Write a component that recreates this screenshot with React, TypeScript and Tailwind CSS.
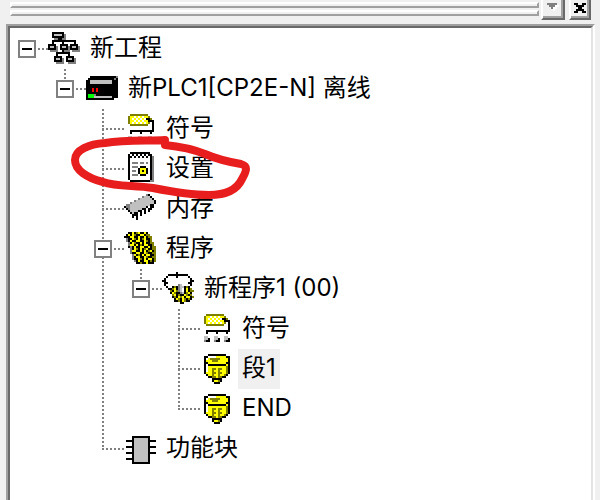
import React, { useState } from 'react';
import clsx from 'clsx';

interface TreeItem {
    label: string;
    icon: string[];
    selected?: boolean;
    children?: TreeItem[];
}

const PALETTE: Record<string, string> = {
    k: '#000000',
    g: '#808080',
    s: '#c0c0c0',
    w: '#ffffff',
    y: '#ffff00',
    o: '#808000',
    r: '#ff0000',
    l: '#00ff00',
};

// 16x16 bitmaps, one letter per pixel
const projectIcon = [
    '..kkkkkk........',
    '..ksssskg.......',
    '..kkkkkkg.......',
    '...ggkkgg.......',
    '..kkkkkkkkkkkk..',
    '..k....k.....k..',
    'kkkk..kkkk.kkkk.',
    'ksskg.ksskgksskg',
    'kkkkg.kkkkgkkkkg',
    '.gggg..kggg.gggg',
    '....kkkkkkk.....',
    '....k.....k.....',
    '...kkkk..kkkk...',
    '...ksskg.ksskg..',
    '...kkkkg.kkkkg..',
    '....gggg..gggg..',
];

const plcIcon = [
    '................',
    '................',
    '..kkkkkkkkkkkkkg',
    '.kkkkkkkkkkkkkgk',
    'kkssssssssssskkk',
    'kkssssssssssskkk',
    'kkkkkkkkkkkkkkkk',
    'kkkkkkkkkkkkkkkk',
    'kkkrkrkkkkkkkkkk',
    'kkkrkrkkkkkkkkkk',
    'kkkkkkkkkkkkkkkk',
    'klllgkkkkkkkkkkk',
    'klllssssssssskkk',
    'kkkkkkkkkkkkkk..',
];

const symbolIcon = [
    '................',
    '...ooooooooo....',
    '..oyywywywyyo...',
    '..oywywywywkko..',
    '..oyywywywyykkk.',
    '..oywywywywyo.k.',
    '...ooooooooo..k.',
    '..............k.',
    '..............k.',
    '...kkkkkkkkkkkk.',
    '...k....k....k..',
    '................',
    '..ss...ss...ss..',
    '..ssk..ssk..ssk.',
    '..gkk..gkk..gkk.',
];

const settingsIcon = [
    '...kkkkkkkkkk...',
    '..kwkwkwkwkwkk..',
    '..kkwkwkwkwkwkg.',
    '..kwwwwwwwwwwkg.',
    '..kwwwwwwwwwwkg.',
    '..kwgggwggwgwkg.',
    '..kwwwwwwwwwwkg.',
    '..kwgggwkkkwwkg.',
    '..kwwwwkyyykwkg.',
    '..kwggwkykykwkg.',
    '..kwwwwkyyykwkg.',
    '..kwgggwkkkwwkg.',
    '..kwwwwwwwwwwkg.',
    '..kwwwwwwwwwwkg.',
    '...kkkkkkkkkkgg.',
];

const memoryIcon = [
    '................',
    '...........gk...',
    '.........gsssk..',
    '.......gssssssk.',
    '.....gsssssssssk',
    '...gsssssssssssk',
    '.ggsssssssssskk.',
    'kggssssssssk.kk.',
    '.kgsssssskk.kk..',
    '..ksssskk.k.k...',
    '...kskk.k.k.....',
    '....kkk.k.......',
    '....k.k.........',
    '......k.........',
];

const programsIcon = [
    '..kkykoykkyk....',
    '.kykyokkyykoo...',
    'kkkyykkykkykoo..',
    '.gkkyokykoykko..',
    '.gkykkyykkyoko..',
    '..gkyokkykykkoo.',
    '..gyykykokyykko.',
    '..kgkykkyykkykoo',
    '...gkyokykoykkoo',
    '...gyykkykykoyko',
    '...gkkyykkyokkoo',
    '....gykokykyykko',
    '....gkyykkyokkoo',
    '....gkkyokykyyko',
    '.....gkykkyykoko',
    '......kkokkykkk.',
];

const programIcon = [
    '.......k........',
    '...kkkkkkkkkk...',
    '..k....k.....k..',
    '.k............k.',
    'kk............kk',
    '.kk..........kk.',
    '.k......gs....k.',
    '..k..kokgsskok..',
    '...kkoykgswkyko.',
    '....okyogswkykoo',
    '....kyokkgskoyk.',
    '.....oykokkyoko.',
    '.....kokyoykyyko',
    '......kyokyokok.',
    '......kkokyokk..',
    '.........kk.....',
];

const sectionIcon = [
    '................',
    '....kkkkkkkkk...',
    '..kkwwwwyyyyykk.',
    '..kwyoooooyyyyk.',
    '..kyyyoooyyyyyk.',
    '..kkyyyyyyyyykk.',
    '..kwkkkkkkkkkyk.',
    '..kwyyyyyyyyyok.',
    '..kwyyooyooyyok.',
    '..kwyyoyyoyyyok.',
    '..kyyyooyooyyok.',
    '...kyyoyyoyyok..',
    '....kkooyookk...',
    '......kkkkk.....',
    '......kyyok.....',
    '.......kkk......',
];

const functionBlockIcon = [
    '................',
    '................',
    '....kkkkkkkkk...',
    '....ksssssssk...',
    '.kkkkssssssskkkk',
    '....ksssssssk...',
    '....ksssssssk...',
    '.kkkkssssssskkkk',
    '....ksssssssk...',
    '....ksssssssk...',
    '.kkkkssssssskkkk',
    '....ksssssssk...',
    '....ksssssssk...',
    '.kkkksssssssk...',
    '....ksssssssk...',
    '....kkkkkkkkk...',
];

const closeIcon = [
    'kk..kk',
    '.kkkk.',
    '..kk..',
    '.kkkk.',
    'kk..kk',
];

const dropIcon = [
    'ggggg.',
    '.gggww',
    '..gww.',
    '...w..',
];

const project: TreeItem = {
    label: '新工程',
    icon: projectIcon,
    children: [
        {
            label: '新PLC1[CP2E-N] 离线',
            icon: plcIcon,
            children: [
                { label: '符号', icon: symbolIcon },
                { label: '设置', icon: settingsIcon },
                { label: '内存', icon: memoryIcon },
                {
                    label: '程序',
                    icon: programsIcon,
                    children: [
                        {
                            label: '新程序1 (00)',
                            icon: programIcon,
                            children: [
                                { label: '符号', icon: symbolIcon },
                                { label: '段1', icon: sectionIcon, selected: true },
                                { label: 'END', icon: sectionIcon },
                            ],
                        },
                    ],
                },
                { label: '功能块', icon: functionBlockIcon },
            ],
        },
    ],
};

const Bitmap: React.FC<{ rows: string[]; size?: number; className: string }> = ({ rows, size = 16, className }) => (
    <svg viewBox={`0 0 ${size} ${size}`} shapeRendering="crispEdges" aria-hidden="true" className={className}>
        {rows.map((row, y) =>
            row.split('').map((c, x) =>
                PALETTE[c] ? <rect key={`${x}-${y}`} x={x} y={y} width="1" height="1" fill={PALETTE[c]} /> : null
            )
        )}
    </svg>
);

const TreeNode: React.FC<{ item: TreeItem; root?: boolean; last?: boolean }> = ({ item, root, last }) => {
    const [open, setOpen] = useState(true);

    return (
        <li
            className={clsx(
                !root && 'bg-[repeating-linear-gradient(to_bottom,#808080_0_2px,transparent_2px_4px)] bg-no-repeat bg-[position:8px_0]',
                !root && (last ? 'bg-[length:2px_20px]' : 'bg-[length:2px_100%]')
            )}
        >
            <div className="flex h-10 items-center">
                {item.children ? (
                    <>
                        <button
                            type="button"
                            aria-label={item.label}
                            aria-expanded={open}
                            onClick={() => setOpen(!open)}
                            className="flex size-[18px] shrink-0 items-center justify-center border-2 border-[#808080] bg-white"
                        >
                            <span className="h-0.5 w-2.5 bg-black" />
                        </button>
                        <span className="ml-0.5 h-0.5 w-2.5 shrink-0 bg-[repeating-linear-gradient(to_right,#808080_0_2px,transparent_2px_4px)]" />
                    </>
                ) : (
                    <span className="ml-2 h-0.5 w-[22px] shrink-0 bg-[repeating-linear-gradient(to_right,#808080_0_2px,transparent_2px_4px)]" />
                )}
                <Bitmap rows={item.icon} className="mb-0.5 size-8 shrink-0" />
                <span className={clsx('ml-1.5 h-10 px-1 leading-[38px] whitespace-nowrap', item.selected && 'bg-[#f0f0f0]')}>
                    {item.label}
                </span>
            </div>
            {item.children && open && (
                <ul className="pl-[38px]">
                    {item.children.map((child, i) => (
                        <TreeNode key={child.label} item={child} last={i === item.children!.length - 1} />
                    ))}
                </ul>
            )}
        </li>
    );
};

const App: React.FC = () => {
    return (
        <div className="relative flex min-h-screen flex-col bg-[#f0f0f0] font-['Inter','Noto_Sans_CJK_SC',sans-serif] text-2xl text-black">
            {/* Docking bar */}
            <div className="flex h-6 items-start pr-[9px] pl-2.5">
                <div className="mr-0.5 flex flex-1 flex-col gap-0.5 pt-0.5">
                    <div className="h-1.5 border-2 border-t-white border-r-[#a0a0a0] border-b-[#a0a0a0] border-l-white" />
                    <div className="h-1.5 border-2 border-t-white border-r-[#a0a0a0] border-b-[#a0a0a0] border-l-white" />
                </div>
                <button
                    type="button"
                    aria-label="菜单"
                    className="mr-1 flex h-5 w-6 items-center justify-center border-r-2 border-b-2 border-l-2 border-r-[#696969] border-b-[#696969] border-l-white shadow-[inset_-2px_-2px_0_#a0a0a0]"
                >
                    <Bitmap rows={dropIcon} size={6} className="size-3" />
                </button>
                <button
                    type="button"
                    aria-label="关闭"
                    className="flex h-5 w-[22px] items-center justify-center border-r-2 border-b-2 border-l-2 border-r-[#696969] border-b-[#696969] border-l-white shadow-[inset_-2px_-2px_0_#a0a0a0]"
                >
                    <Bitmap rows={closeIcon} size={6} className="size-3" />
                </button>
            </div>

            {/* Project tree */}
            <div className="mr-[5px] ml-1.5 flex flex-1 flex-col border-t-2 border-r-2 border-l-2 border-t-[#a0a0a0] border-r-white border-l-[#a0a0a0]">
                <div className="flex-1 border-t-2 border-r-2 border-l-2 border-t-[#696969] border-r-[#e3e3e3] border-l-[#696969] bg-white pt-px pl-2">
                    <ul>
                        <TreeNode item={project} root last />
                    </ul>
                </div>
            </div>

            {/* Hand-drawn marker around the settings entry */}
            <svg
                viewBox="0 0 184 70"
                aria-hidden="true"
                className="pointer-events-none absolute top-[132px] left-[69px] h-[70px] w-[184px]"
                fill="none"
                stroke="#e81e1e"
                strokeWidth="8"
                strokeLinecap="round"
                strokeLinejoin="round"
            >
                <path d="M96 8C80 9 56 8 36 11C20 12 6 18 6 28C6 38 18 46 34 50C48 55 66 53 84 56C104 60 120 63 140 63C156 63 168 58 173 47C178 38 179 34 172 32C160 30 150 28 136 22C126 18 116 15 96 13" />
            </svg>
        </div>
    );
};

export default App;
